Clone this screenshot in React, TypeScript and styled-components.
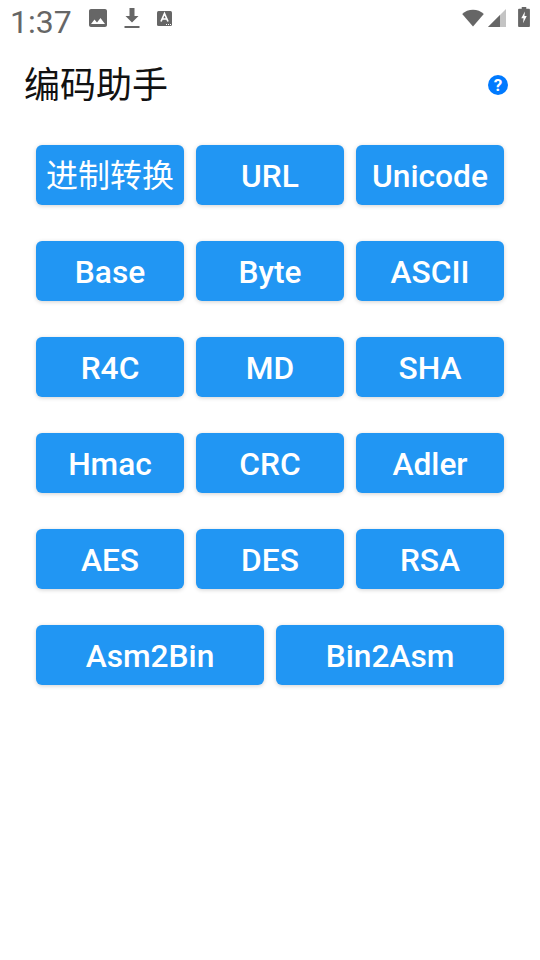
import styled, { createGlobalStyle } from "styled-components";
import { MdImage } from "react-icons/md";

const GlobalStyle = createGlobalStyle`
	html, body {
		margin: 0;
		padding: 0;
		background: #ffffff;
		font-family: Roboto, "Noto Sans CJK SC", sans-serif;
	}
`;

type CodeButton = {
	label: string;
	span?: number;
	cjk?: boolean;
};

const buttons: CodeButton[] = [
	{ label: "进制转换", cjk: true },
	{ label: "URL" },
	{ label: "Unicode" },
	{ label: "Base" },
	{ label: "Byte" },
	{ label: "ASCII" },
	{ label: "R4C" },
	{ label: "MD" },
	{ label: "SHA" },
	{ label: "Hmac" },
	{ label: "CRC" },
	{ label: "Adler" },
	{ label: "AES" },
	{ label: "DES" },
	{ label: "RSA" },
	{ label: "Asm2Bin", span: 3 },
	{ label: "Bin2Asm", span: 3 },
];

const App = () => {
	return (
		<Page>
			<GlobalStyle />
			<StatusBar>
				<Clock>1:37</Clock>
				<NotifyIcons>
					<MdImage size={24} />
					<svg width="24" height="24" viewBox="0 0 24 24">
						<path d="M8.5 2 H13.5 V10 H17.5 L11 16.5 L4.5 10 H8.5 Z" fill="#666" />
						<rect x="3.5" y="20" width="15" height="2" fill="#666" />
					</svg>
					<svg width="18" height="18" viewBox="0 0 18 18">
						<rect x="1" y="2" width="15" height="15" rx="1.5" fill="#666" />
						<path d="M5 12.5 L8.5 4.5 L12 12.5 M6.4 10 H10.6" stroke="#fff" strokeWidth="1.7" fill="none" />
						<path d="M10 15.5 h1 M12 15.5 h1 M14 15.5 h1" stroke="#fff" strokeWidth="1" />
					</svg>
				</NotifyIcons>
				<SystemIcons>
					<svg width="22" height="18" viewBox="0 0 24 20">
						<path d="M0 5.5 C6 -0.8 18 -0.8 24 5.5 L12 19.5 Z" fill="#666" />
					</svg>
					<svg width="18" height="18" viewBox="0 0 18 18">
						<path d="M0 18 L18 0 V18 Z" fill="#c4c4c4" />
						<path d="M0 18 L12 6 V18 Z" fill="#666" />
					</svg>
					<BatteryIcon width="12" height="20" viewBox="0 0 13 22">
						<path d="M4 0 H9 V2 H12 Q13 2 13 3 V21 Q13 22 12 22 H1 Q0 22 0 21 V3 Q0 2 1 2 H4 Z" fill="#666" />
						<path d="M7.5 5 L3.5 12.5 H6 L5.5 18 L9.5 10 H7 Z" fill="#fff" />
					</BatteryIcon>
				</SystemIcons>
			</StatusBar>
			<Header>
				<Title>编码助手</Title>
				<HelpBadge>?</HelpBadge>
			</Header>
			<ButtonGrid>
				{buttons.map((item) => (
					<GridButton key={item.label} $span={item.span ?? 2} $cjk={item.cjk}>
						{item.label}
					</GridButton>
				))}
			</ButtonGrid>
		</Page>
	);
};

const Page = styled.div`
	width: 540px;
	height: 960px;
	overflow: hidden;
	background: #ffffff;
`;

const StatusBar = styled.div`
	display: flex;
	align-items: center;
	height: 44px;
	padding: 0 10px;
	box-sizing: border-box;
	color: #666666;
`;

const Clock = styled.span`
	font-size: 32px;
	line-height: 44px;
	color: #666666;
	width: 76px;
`;

const NotifyIcons = styled.div`
	display: flex;
	align-items: center;
	gap: 11px;
	margin-top: -8px;
`;

const SystemIcons = styled.div`
	display: flex;
	align-items: flex-end;
	gap: 4px;
	margin: -10px 0 0 auto;
`;

const BatteryIcon = styled.svg`
	margin-left: 8px;
`;

const Header = styled.div`
	display: flex;
	align-items: center;
	justify-content: space-between;
	height: 84px;
	padding: 0 32px 0 24px;
`;

const Title = styled.h1`
	margin: -8px 0 0;
	font-size: 36px;
	font-weight: 400;
	color: #111111;
`;

const HelpBadge = styled.span`
	display: flex;
	align-items: center;
	justify-content: center;
	width: 20px;
	height: 20px;
	border-radius: 50%;
	background: #007aff;
	color: #ffffff;
	font-size: 17px;
	font-weight: 700;
	margin-top: -2px;
`;

const ButtonGrid = styled.div`
	display: grid;
	grid-template-columns: repeat(6, 1fr);
	grid-auto-rows: 60px;
	column-gap: 12px;
	row-gap: 36px;
	padding: 17px 36px 0;
`;

const GridButton = styled.button<{ $span: number; $cjk?: boolean }>`
	grid-column: span ${(props) => props.$span};
	padding: ${(props) => (props.$cjk ? "0 0 4px" : "2px 0 0")};
	border: none;
	border-radius: 6px;
	background: #2196f3;
	color: #ffffff;
	font-family: inherit;
	font-size: ${(props) => (props.$cjk ? "32px" : "31.7px")};
	font-weight: ${(props) => (props.$cjk ? 400 : 500)};
	box-shadow: 0 1px 4px rgba(0, 0, 0, 0.18);
`;

export default App;
